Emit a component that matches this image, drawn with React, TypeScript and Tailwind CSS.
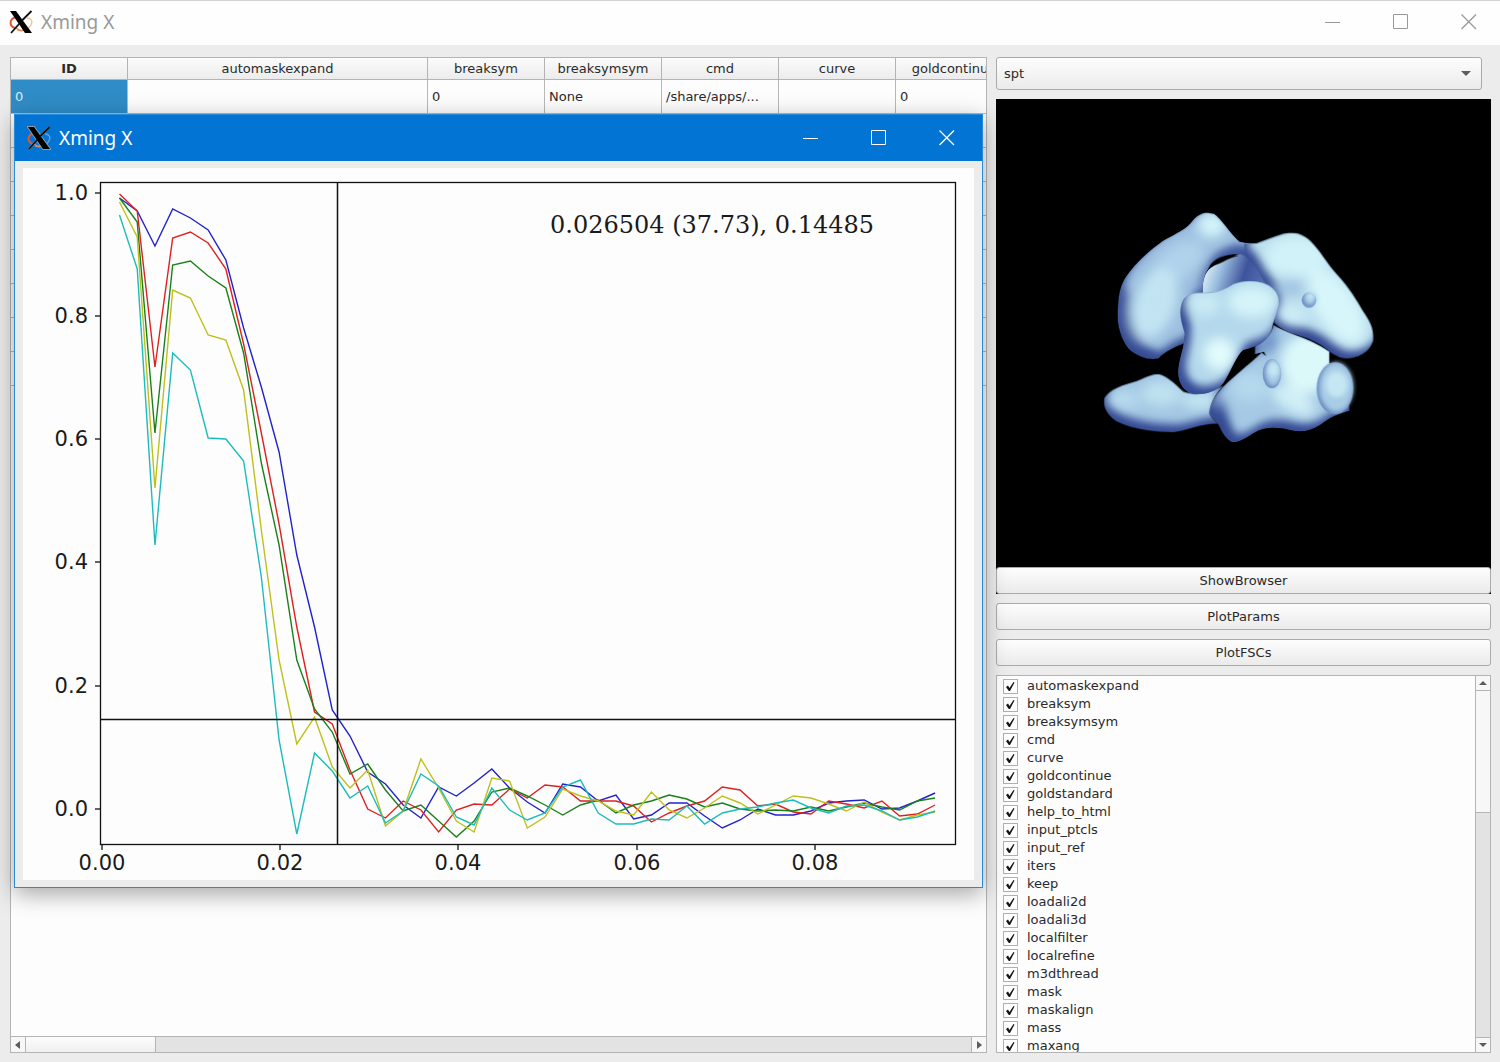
import type { ReactNode } from "react";

const COLUMNS = [
  { name: "ID", value: "0" },
  { name: "automaskexpand", value: "" },
  { name: "breaksym", value: "0" },
  { name: "breaksymsym", value: "None" },
  { name: "cmd", value: "/share/apps/..." },
  { name: "curve", value: "" },
  { name: "goldcontinue", value: "0" },
];

const PARAMS = [
  "automaskexpand",
  "breaksym",
  "breaksymsym",
  "cmd",
  "curve",
  "goldcontinue",
  "goldstandard",
  "help_to_html",
  "input_ptcls",
  "input_ref",
  "iters",
  "keep",
  "loadali2d",
  "loadali3d",
  "localfilter",
  "localrefine",
  "m3dthread",
  "mask",
  "maskalign",
  "mass",
  "maxang",
];

// FSC curves, one sample per shell, in chart units (y grows downwards)
const CURVES = [
  {
    color: "#2222cc",
    ys: [198, 211, 246, 209, 218, 230, 260, 328, 387, 452, 555, 627, 710, 736, 772, 784, 805, 818, 787, 796, 783, 769, 788, 802, 813, 784, 787, 801, 795, 819, 815, 803, 803, 816, 828, 820, 809, 815, 815, 811, 803, 801, 800, 809, 808, 801, 793],
  },
  {
    color: "#e02020",
    ys: [194, 211, 367, 238, 232, 243, 269, 344, 433, 524, 627, 712, 724, 770, 809, 818, 801, 810, 832, 810, 804, 805, 789, 798, 785, 787, 801, 801, 801, 806, 822, 813, 806, 801, 787, 790, 806, 804, 812, 814, 801, 804, 808, 801, 816, 814, 805],
  },
  {
    color: "#1a801a",
    ys: [198, 222, 433, 265, 261, 276, 288, 353, 463, 545, 660, 709, 732, 774, 764, 790, 811, 805, 821, 837, 821, 792, 788, 796, 805, 815, 805, 800, 813, 805, 801, 795, 799, 807, 803, 809, 811, 810, 811, 807, 811, 807, 803, 807, 810, 801, 798],
  },
  {
    color: "#bfbf1c",
    ys: [202, 237, 488, 290, 298, 335, 340, 390, 530, 660, 744, 717, 767, 788, 770, 826, 811, 759, 788, 821, 832, 778, 781, 828, 817, 789, 796, 801, 811, 815, 792, 810, 818, 808, 796, 803, 814, 805, 796, 798, 804, 811, 802, 812, 820, 815, 812],
  },
  {
    color: "#1cbcbc",
    ys: [215, 269, 545, 353, 370, 438, 439, 461, 577, 740, 834, 753, 771, 798, 786, 823, 811, 774, 786, 817, 825, 788, 810, 820, 813, 787, 780, 813, 824, 824, 819, 820, 806, 824, 813, 809, 807, 803, 800, 808, 813, 806, 805, 811, 820, 817, 811],
  },
];

const X_TICKS = [
  { x: 102, label: "0.00" },
  { x: 280, label: "0.02" },
  { x: 458, label: "0.04" },
  { x: 637, label: "0.06" },
  { x: 815, label: "0.08" },
];

const Y_TICKS = [
  { y: 193, label: "1.0" },
  { y: 316, label: "0.8" },
  { y: 439, label: "0.6" },
  { y: 562, label: "0.4" },
  { y: 686, label: "0.2" },
  { y: 809, label: "0.0" },
];

const FIRST_X = 119.5;
const STEP_X = 17.73;

function XLogo({ outlined = false }: { outlined?: boolean }) {
  return (
    <svg viewBox="0 0 24 24" className="h-6 w-6" aria-hidden>
      <path d="M7 7 C0 9 0 16 6 18" fill="none" stroke="#e8552d" strokeWidth="2" />
      <path d="M8 20 C14 21 20 19 22 15 C24 11 22 8 18 8" fill="none" stroke={outlined ? "#6aa0cc" : "#ecc795"} strokeWidth="1.4" />
      <path d="M7 18 C10 21 13 21 15 20" fill="none" stroke="#e58a55" strokeWidth="1.4" />
      {outlined && (
        <path d="M1 1 H7 L23 23 H16 Z M22 1 L2 23" fill="none" stroke="#8f9ba2" strokeWidth="2" />
      )}
      <path d="M1 1 H7 L23 23 H16 Z" fill="#000" />
      <path d="M22.5 1 L13 10.5 M10.5 13.5 L2 23" stroke="#111" strokeWidth="1.8" />
    </svg>
  );
}

function WindowButtons() {
  const button = "flex h-8 w-14 items-center justify-center";
  return (
    <div className="ml-auto flex gap-3">
      <button type="button" aria-label="Minimize" className={button}>
        <svg viewBox="0 0 16 16" className="h-4 w-4" fill="none" stroke="currentColor">
          <path d="M0 8.5 H15" />
        </svg>
      </button>
      <button type="button" aria-label="Maximize" className={button}>
        <svg viewBox="0 0 16 16" className="h-4 w-4" fill="none" stroke="currentColor">
          <path d="M0.5 0.5 H14.5 V14.5 H0.5 Z" />
        </svg>
      </button>
      <button type="button" aria-label="Close" className={button}>
        <svg viewBox="0 0 16 16" className="h-4 w-4" fill="none" stroke="currentColor" strokeWidth="1.3">
          <path d="M0.5 0.5 L15 15 M15 0.5 L0.5 15" />
        </svg>
      </button>
    </div>
  );
}

function Arrow({ d }: { d: string }) {
  return (
    <svg viewBox="0 0 10 10" className="h-[10px] w-[10px]" fill="#5c5c5c" aria-hidden>
      <path d={d} />
    </svg>
  );
}

function ParamTable() {
  return (
    <section className="flex min-w-0 flex-1 flex-col border border-[#b4b4b4] bg-[#fdfdfd]">
      <div className="min-h-0 flex-1 overflow-hidden">
        <table className="w-[1002px] table-fixed border-separate border-spacing-0">
          <colgroup>
            <col className="w-[117px]" />
            <col className="w-[300px]" />
            <col className="w-[117px]" />
            <col className="w-[117px]" />
            <col className="w-[117px]" />
            <col className="w-[117px]" />
            <col className="w-[117px]" />
          </colgroup>
          <thead>
            <tr>
              {COLUMNS.map((c) => (
                <th
                  key={c.name}
                  className="h-[22px] border-r border-b border-[#b4b4b4] bg-linear-to-b from-[#fbfbfb] to-[#ececec] p-0 text-center leading-5 font-normal first:font-bold"
                >
                  {c.name}
                </th>
              ))}
            </tr>
          </thead>
          <tbody>
            <tr>
              {COLUMNS.map((c) => (
                <td
                  key={c.name}
                  className="h-[34px] border-r border-b border-[#b8b8b8] px-1 py-0 first:bg-[#308cc6] first:text-[#d8ecf8]"
                >
                  {c.value}
                </td>
              ))}
            </tr>
            {[1, 2, 3, 4, 5, 6, 7, 8].map((row) => (
              <tr key={row}>
                {COLUMNS.map((c) => (
                  <td key={c.name} className="h-[34px] border-r border-b border-[#b8b8b8] p-0" />
                ))}
              </tr>
            ))}
          </tbody>
        </table>
      </div>
      <div className="flex h-4 border-t border-[#b4b4b4] bg-[#e3e3e3]">
        <button type="button" aria-label="Scroll left" className="flex w-[15px] items-center justify-center border-r border-[#b4b4b4] bg-[#f7f7f7]">
          <Arrow d="M7 1 V9 L2 5 Z" />
        </button>
        <div className="w-[130px] border-r border-[#b4b4b4] bg-linear-to-b from-[#fcfcfc] to-[#f0f0f0]" />
        <button type="button" aria-label="Scroll right" className="ml-auto flex w-[15px] items-center justify-center border-l border-[#b4b4b4] bg-[#f7f7f7]">
          <Arrow d="M3 1 V9 L8 5 Z" />
        </button>
      </div>
    </section>
  );
}

// Lit from the upper right: the pale copy is shifted that way, leaving a dark rim below
function Blob({
  id,
  d,
  fill = "#b0d2ea",
  children,
}: {
  id: string;
  d: string;
  fill?: string;
  children?: ReactNode;
}) {
  return (
    <g clipPath={`url(#${id})`}>
      <clipPath id={id}>
        <path d={d} />
      </clipPath>
      <path d={d} fill="#344a94" />
      <path d={d} fill={fill} filter="url(#rim)" transform="translate(14 -24)" />
      <g filter="url(#soft)">{children}</g>
      <path d={d} fill="none" stroke="#56749f" strokeWidth="4" opacity="0.35" />
    </g>
  );
}

function DensityMap() {
  return (
    <svg viewBox="0 0 495 495" className="block h-full w-full" role="img" aria-label="Density map">
      <defs>
        <filter id="soft" x="-50%" y="-50%" width="200%" height="200%">
          <feGaussianBlur stdDeviation="18" />
        </filter>
        <filter id="rim" x="-50%" y="-50%" width="200%" height="200%">
          <feGaussianBlur stdDeviation="13" />
        </filter>
        <filter id="small" x="-50%" y="-50%" width="200%" height="200%">
          <feGaussianBlur stdDeviation="6" />
        </filter>
        <linearGradient id="ring" x1="0" x2="1" y1="0.4" y2="0.6">
          <stop offset="0" stopColor="#e2f6fa" />
          <stop offset="0.25" stopColor="#9cbfe0" />
          <stop offset="0.6" stopColor="#3e539b" />
          <stop offset="1" stopColor="#5a78b8" />
        </linearGradient>
      </defs>
      <g transform="translate(94 101) scale(0.3333)">
        <path
          d="M338 280 C335 230 350 205 385 190 C410 172 440 160 475 160 L545 230 L530 275 L420 285 Z"
          fill="url(#ring)"
        />
        <Blob
          id="left"
          d="M350 38 L372 42 C392 55 420 100 448 125 L482 132 L486 176 C470 174 462 162 440 162 C400 164 370 185 352 210 C340 230 338 250 338 280 L300 300 L285 400 L283 430 C258 440 232 450 205 475 C180 482 140 470 115 445 C90 410 80 370 84 330 C86 290 88 265 105 235 C135 190 180 150 220 122 C260 100 290 88 310 60 C322 46 335 40 350 38 Z"
          fill="#9dc0e0"
        >
          <path d="M105 270 C88 330 100 430 190 478" fill="none" stroke="#344a94" strokeWidth="30" />
          <ellipse cx="365" cy="76" rx="42" ry="38" fill="#d4f4f9" />
          <ellipse cx="260" cy="190" rx="95" ry="50" fill="#b0d2ea" transform="rotate(-38 260 190)" />
          <ellipse cx="195" cy="310" rx="62" ry="110" fill="#c2e4f2" transform="rotate(18 195 310)" />
          <path d="M470 158 C410 150 355 185 335 262" fill="none" stroke="#4660a6" strokeWidth="22" />
        </Blob>
        <path
          d="M355 208 C362 184 388 166 430 164 L446 167 C420 172 404 184 385 192 C372 196 362 202 355 208 Z"
          fill="#000"
        />
        <Blob
          id="base"
          d="M550 375 C600 405 650 410 718 455 L718 490 L775 600 L778 632 C750 640 720 650 690 675 C660 695 630 698 600 690 C560 680 520 680 490 700 C460 720 440 730 425 726 C400 710 395 690 385 672 L355 640 C360 610 380 580 400 560 C430 530 480 490 515 458 L528 468 L522 455 L495 462 L495 440 C530 420 545 400 550 375 Z"
          fill="#a6cae5"
        >
          <ellipse cx="660" cy="490" rx="90" ry="90" fill="#dcf9fa" />
          <ellipse cx="610" cy="600" rx="72" ry="34" fill="#d0f0f7" transform="rotate(30 610 600)" />
          <ellipse cx="530" cy="425" rx="34" ry="34" fill="#7397ca" />
          <ellipse cx="480" cy="560" rx="56" ry="44" fill="#b4d8ec" />
          <path d="M385 590 C405 600 410 660 430 720 L350 700 Z" fill="#344a94" />
        </Blob>
        <Blob
          id="tail"
          d="M200 522 C220 520 250 545 280 575 C310 585 340 582 365 572 L402 556 C380 580 362 605 358 640 C365 655 380 665 385 672 C340 670 300 690 250 697 C200 697 130 690 80 665 C50 645 38 620 42 595 C60 565 100 555 140 543 C165 532 185 523 200 522 Z"
          fill="#a4c8e4"
        >
          <ellipse cx="215" cy="580" rx="60" ry="38" fill="#bfe2f0" />
          <ellipse cx="100" cy="600" rx="50" ry="24" fill="#b8dcee" />
          <ellipse cx="330" cy="602" rx="54" ry="22" fill="#c8eaf4" />
        </Blob>
        <Blob
          id="right"
          d="M462 130 L500 130 C550 112 580 100 600 98 C625 98 645 108 660 122 C690 150 710 190 740 222 C780 265 800 300 820 335 C840 365 852 385 850 420 C840 460 800 475 770 476 C740 475 720 455 700 440 C670 420 640 410 610 402 C590 398 570 385 552 368 L560 300 C545 270 520 250 505 215 L480 186 L462 166 Z"
          fill="#bcdfee"
        >
          <ellipse cx="620" cy="170" rx="95" ry="62" fill="#d0f2f8" />
          <ellipse cx="740" cy="320" rx="60" ry="125" fill="#d6f6fa" transform="rotate(-32 740 320)" />
          <ellipse cx="605" cy="345" rx="44" ry="28" fill="#ccecf6" />
          <ellipse cx="600" cy="262" rx="46" ry="28" fill="#a2c5e3" />
          <path d="M470 170 C490 205 520 240 550 280" fill="none" stroke="#3d559d" strokeWidth="26" />
          <path d="M600 408 C660 416 700 446 740 480" fill="none" stroke="#344a94" strokeWidth="18" />
        </Blob>
        <Blob
          id="centre"
          d="M275 310 C285 280 310 278 335 278 C375 280 400 270 430 252 C460 240 500 240 530 253 C555 265 568 285 568 310 C565 340 550 360 545 390 C530 430 500 440 460 450 C440 465 425 510 400 550 C375 580 340 585 310 582 C280 575 262 545 265 510 C268 470 285 440 284 400 C275 370 265 340 275 310 Z"
          fill="#b4d8ec"
        >
          <path d="M272 320 C266 350 288 400 278 450 C258 500 258 565 325 586" fill="none" stroke="#344a94" strokeWidth="26" />
          <ellipse cx="485" cy="305" rx="72" ry="48" fill="#d4f4f9" />
          <ellipse cx="345" cy="312" rx="46" ry="36" fill="#caebf4" />
          <ellipse cx="388" cy="462" rx="46" ry="48" fill="#e2fcfc" />
        </Blob>
        {[
          { cx: 546, cy: 521, rx: 28, ry: 44 },
          { cx: 735, cy: 565, rx: 55, ry: 78 },
          { cx: 657, cy: 300, rx: 22, ry: 23 },
        ].map((e) => (
          <g key={e.cx}>
            <ellipse {...e} fill="#6a8cc0" />
            <ellipse cx={e.cx + 4} cy={e.cy - 4} rx={e.rx - 4} ry={e.ry - 4} fill="#a8cce6" filter="url(#small)" />
            <ellipse cx={e.cx + 5} cy={e.cy - 12} rx={e.rx * 0.6} ry={e.ry * 0.5} fill="#c4e7f3" filter="url(#small)" />
          </g>
        ))}
      </g>
    </svg>
  );
}

function PushButton({ children }: { children: ReactNode }) {
  return (
    <button
      type="button"
      className="h-[27px] w-full shrink-0 rounded-[3px] border border-[#aaa] bg-linear-to-b from-[#fdfdfd] to-[#ebebeb] text-center"
    >
      {children}
    </button>
  );
}

function ParamList() {
  return (
    <div className="flex min-h-0 flex-1 border border-[#b4b4b4] bg-[#fdfdfd]">
      <ul className="min-h-0 flex-1 overflow-hidden pt-px pl-[6px]">
        {PARAMS.map((name) => (
          <li key={name} className="h-[18px]">
            <label className="flex h-[18px] items-center gap-[9px]">
              <span className="relative h-[15px] w-[15px]">
                <input
                  type="checkbox"
                  defaultChecked
                  className="peer block h-[15px] w-[15px] appearance-none border border-[#b0b0b0] bg-white"
                />
                <svg
                  viewBox="0 0 15 15"
                  className="pointer-events-none absolute inset-0 hidden h-[15px] w-[15px] peer-checked:block"
                  aria-hidden
                >
                  <path d="M3 8 L5 6.5 L6.5 9 L10.5 3 L11.5 3.5 L7 12 H5.8 Z" fill="#151515" />
                </svg>
              </span>
              {name}
            </label>
          </li>
        ))}
      </ul>
      <div className="flex w-[15px] flex-col border-l border-[#b4b4b4] bg-[#e3e3e3]">
        <button type="button" aria-label="Scroll up" className="flex h-[15px] items-center justify-center border-b border-[#b4b4b4] bg-[#f7f7f7]">
          <Arrow d="M1 7 H9 L5 3 Z" />
        </button>
        <div className="h-[122px] border-b border-[#b4b4b4] bg-[#f7f7f7]" />
        <button type="button" aria-label="Scroll down" className="mt-auto flex h-[15px] items-center justify-center border-t border-[#b4b4b4] bg-[#f7f7f7]">
          <Arrow d="M1 3 H9 L5 7 Z" />
        </button>
      </div>
    </div>
  );
}

function SidePanel() {
  return (
    <aside className="flex w-[495px] shrink-0 flex-col gap-[9px]">
      <div className="relative mr-[9px] shrink-0">
        <select
          aria-label="Project"
          className="block h-[33px] w-full appearance-none rounded-[3px] border border-[#aaa] bg-linear-to-b from-[#fdfdfd] to-[#ebebeb] px-[7px]"
        >
          <option>spt</option>
        </select>
        <span className="pointer-events-none absolute top-[11px] right-[11px]">
          <Arrow d="M0 3 H10 L5 8 Z" />
        </span>
      </div>
      <div className="relative aspect-square shrink-0 bg-black">
        <DensityMap />
        <div className="absolute inset-x-0 bottom-0 flex">
          <PushButton>ShowBrowser</PushButton>
        </div>
      </div>
      <PushButton>PlotParams</PushButton>
      <PushButton>PlotFSCs</PushButton>
      <ParamList />
    </aside>
  );
}

function FscChart() {
  return (
    <svg viewBox="23 168 951 712" className="block h-auto w-full bg-[#fdfdfd]" role="img" aria-label="FSC curves">
      {CURVES.map((c) => (
        <polyline
          key={c.color}
          points={c.ys.map((y, i) => `${FIRST_X + i * STEP_X},${y}`).join(" ")}
          fill="none"
          stroke={c.color}
          strokeWidth="1.4"
        />
      ))}
      <g stroke="#111" strokeWidth="1.3" fill="none">
        <rect x="100.5" y="182.5" width="855" height="662" />
        <path d="M337.5 182 V844 M100 719.5 H955" strokeWidth="1.5" />
        {X_TICKS.map((t) => (
          <path key={t.label} d={`M${t.x} 844 v6`} />
        ))}
        {Y_TICKS.map((t) => (
          <path key={t.label} d={`M100 ${t.y} h-5`} />
        ))}
      </g>
      <g fill="#1a1a1a" fontSize="21" fontFamily="DejaVu Sans, sans-serif">
        {X_TICKS.map((t) => (
          <text key={t.label} x={t.x} y="870" textAnchor="middle">
            {t.label}
          </text>
        ))}
        {Y_TICKS.map((t) => (
          <text key={t.label} x="88" y={t.y + 7} textAnchor="end">
            {t.label}
          </text>
        ))}
      </g>
      <text x="550" y="233" fontSize="24" fill="#1a1a1a" fontFamily="DejaVu Serif, serif">
        0.026504 (37.73), 0.14485
      </text>
    </svg>
  );
}

function PlotWindow() {
  return (
    <section className="absolute top-[114px] left-[14px] w-[969px] border border-[#2b8ad6] bg-[#ececec] shadow-[0_6px_22px_rgba(0,0,0,0.35)]">
      <header className="flex h-[46px] items-center bg-[#0275d4] pr-[7px] pb-px pl-3 text-white">
        <XLogo outlined />
        <h2 className="ml-2 font-['Noto_Sans',sans-serif] text-[19px] leading-6">Xming X</h2>
        <WindowButtons />
      </header>
      <div className="px-2 py-[7px]">
        <FscChart />
      </div>
    </section>
  );
}

export default function App() {
  return (
    <div className="relative flex h-screen flex-col overflow-hidden bg-[#ececec] font-['DejaVu_Sans',sans-serif] text-[13px] text-[#2a2a2a]">
      <header className="flex h-[45px] shrink-0 items-center border-t border-[#d4d0d4] bg-[#fefefe] pr-[3px] pb-[2px] pl-[9px] text-[#999]">
        <XLogo />
        <h1 className="ml-2 font-['Noto_Sans',sans-serif] text-[19px] leading-6">Xming X</h1>
        <WindowButtons />
      </header>
      <main className="flex min-h-0 flex-1 gap-[9px] pt-3 pr-[9px] pb-[9px] pl-[10px]">
        <ParamTable />
        <SidePanel />
      </main>
      <PlotWindow />
    </div>
  );
}
